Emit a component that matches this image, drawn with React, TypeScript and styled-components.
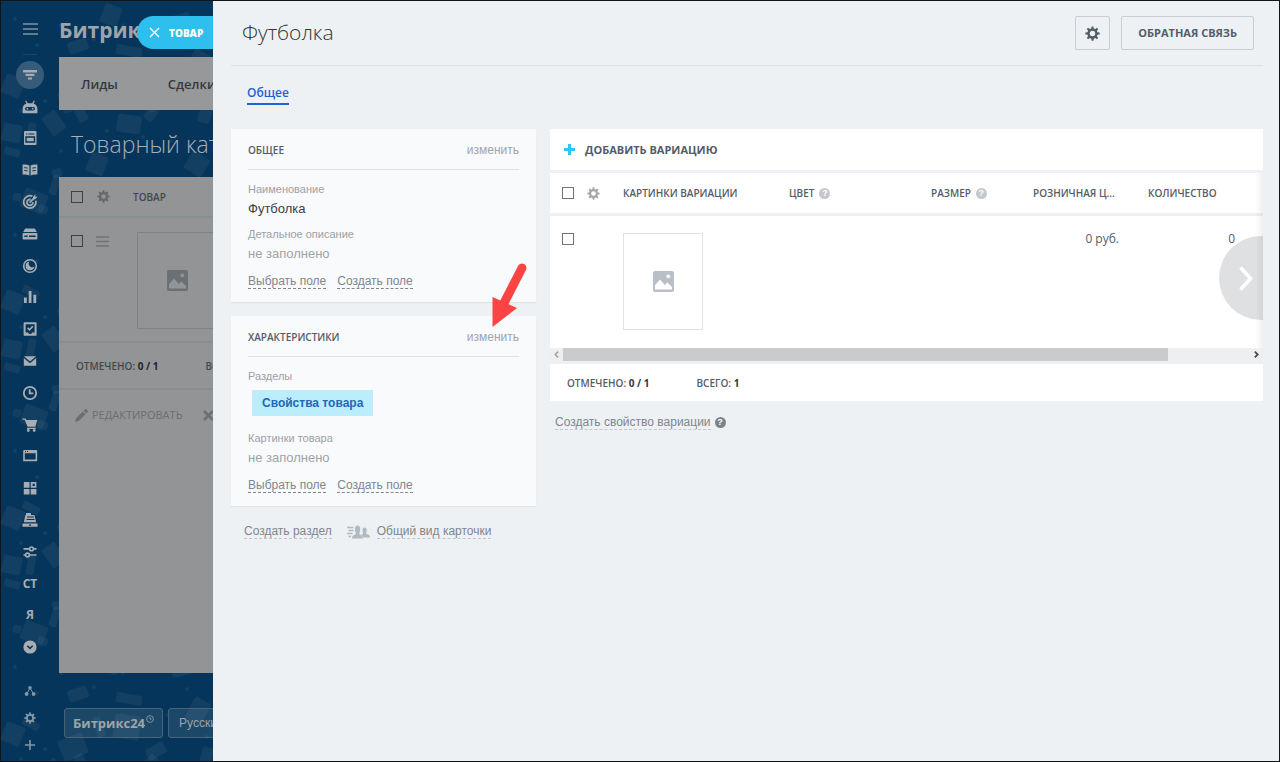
import React from 'react';
import styled, { createGlobalStyle, css } from 'styled-components';

const sans = '"Open Sans", "Liberation Sans", sans-serif';
const arial = '"Liberation Sans", Arial, sans-serif';

const GlobalStyle = createGlobalStyle`
  *, *::before, *::after { box-sizing: border-box; }
  body { margin: 0; font-family: ${sans}; background: #edf1f4; }
  button { font: inherit; border: 0; padding: 0; background: none; color: inherit; cursor: pointer; }
  a { color: inherit; text-decoration: none; }
  h1, h2, p { margin: 0; font-weight: inherit; font-size: inherit; }
  svg { display: block; flex: none; }
`;

const Screen = styled.div`
  display: flex;
  min-height: 100vh;
  border: 1px solid #111418;
  background: #05355a;
`;

/* ---------- dimmed page behind the slider ---------- */

const Backdrop = styled.div`
  position: relative;
  flex: 0 0 212px;
  display: flex;
  overflow: hidden;
  white-space: nowrap;
  color: #9fa4a8;
`;

const Wallpaper = styled.svg`
  position: absolute;
  inset: 0;
  width: 100%;
  height: 100%;
`;

const Rail = styled.nav`
  position: relative;
  flex: 0 0 58px;
  display: flex;
  flex-direction: column;
  align-items: center;
  color: #a7adb2;
`;

const RailTop = styled.div`
  display: flex;
  flex-direction: column;
  align-items: center;
  justify-content: space-between;
  width: 100%;
  height: 54px;
  padding-top: 22px;
`;

const RailRule = styled.span`
  width: 14px;
  height: 1px;
  background: #1b466a;
`;

const RailList = styled.div`
  flex: 1;
  display: flex;
  flex-direction: column;
  padding-top: 4px;
`;

const RailFoot = styled.div`
  display: flex;
  flex-direction: column;
  padding-bottom: 3px;
  padding-top: 14px;
  color: #8397a6;
`;

const RailItem = styled.button<{ $small?: boolean }>`
  flex: ${p => (p.$small ? '0 0 27px' : '1 1 0')};
  width: 58px;
  display: flex;
  align-items: center;
  justify-content: center;
  font-size: 12px;
  line-height: 16px;
  font-weight: 700;
`;

const ActiveDisc = styled.span`
  display: flex;
  align-items: center;
  justify-content: center;
  width: 28px;
  height: 28px;
  border-radius: 50%;
  background: #375c7a;
`;

const BackPage = styled.div`
  position: relative;
  flex: 0 0 154px;
  display: flex;
  flex-direction: column;
  overflow: hidden;
`;

const Brand = styled.div`
  height: 56px;
  padding-top: 14px;
  font-size: 21px;
  line-height: 30px;
  font-weight: 700;
`;

const BackNav = styled.div`
  display: flex;
  gap: 50px;
  height: 53px;
  padding-left: 22px;
  align-items: center;
  background: #979899;
  color: #34393f;
  font-size: 13px;
  font-weight: 600;
  line-height: 20px;
`;

const BackTitle = styled.h2`
  height: 67px;
  padding: 18px 0 0 12px;
  font-size: 23px;
  line-height: 32px;
  font-weight: 300;
  color: #a9afb3;
`;

const BackGrid = styled.div`
  flex: 1;
  background: #939496;
  color: #33393f;
`;

const BackRow = styled.div<{ $h: number; $top?: boolean; $pad?: number; $gap?: number }>`
  display: flex;
  align-items: ${p => (p.$top ? 'flex-start' : 'center')};
  gap: ${p => p.$gap ?? 0}px;
  height: ${p => p.$h}px;
  padding-left: ${p => p.$pad ?? 12}px;
  border-bottom: 2px solid #88908f;
  font-size: 10px;
  line-height: 16px;
  font-weight: 600;
  color: #42484e;

  b { color: #22262a; font-weight: 700; }
`;

const BackHeadText = styled.span`
  padding-left: 9px;
`;

const RowTools = styled.div`
  display: flex;
  align-items: center;
  gap: 13px;
  padding-top: 17px;
`;

const BackThumb = styled.div`
  padding: 14px 0 0 14px;
`;

const BackActions = styled.div`
  display: flex;
  align-items: center;
  gap: 4px;
  height: 50px;
  padding-left: 16px;
  color: #6b6f74;
  font-size: 11px;
  line-height: 16px;

  button { display: flex; align-items: center; gap: 4px; margin-right: 16px; }
`;

const BackFooter = styled.div`
  display: flex;
  gap: 5px;
  height: 88px;
  padding: 35px 0 0 5px;
`;

const FooterButton = styled.button<{ $logo?: boolean }>`
  display: flex;
  align-items: center;
  gap: 1px;
  height: 30px;
  padding: 0 ${p => (p.$logo ? 8 : 10)}px;
  border: 1px solid #486578;
  border-radius: 3px;
  background: rgba(255, 255, 255, 0.09);
  font-family: ${p => (p.$logo ? sans : arial)};
  font-weight: ${p => (p.$logo ? 700 : 400)};
  font-size: ${p => (p.$logo ? 13 : 12)}px;
  line-height: 18px;

  svg { align-self: flex-start; margin-top: 6px; }
`;

const SliderLabel = styled.button`
  position: absolute;
  top: 15px;
  right: 0;
  display: flex;
  align-items: center;
  gap: 9px;
  width: 76px;
  height: 33px;
  padding-left: 12px;
  border-radius: 17px 0 0 17px;
  background: #2fbfee;
  color: #fff;
  font-size: 10px;
  line-height: 14px;
  font-weight: 800;
`;

/* ---------- shared bits ---------- */

const Check = styled.input<{ $dim?: boolean }>`
  appearance: none;
  display: block;
  flex: none;
  width: 12px;
  height: 12px;
  margin: 0;
  border: 1px solid ${p => (p.$dim ? '#3c4146' : '#6e747b')};
  background: ${p => (p.$dim ? 'transparent' : '#fff')};
`;

const Thumb = styled.div<{ $dim?: boolean }>`
  flex: none;
  display: flex;
  align-items: center;
  justify-content: center;
  width: 80px;
  height: 97px;
  border: 1px solid ${p => (p.$dim ? '#7f8284' : '#e0e2e5')};
  color: ${p => (p.$dim ? '#6b7075' : '#b9bfc6')};
`;

const GearTone = styled.span<{ $dim?: boolean }>`
  display: block;
  color: ${p => (p.$dim ? '#65696e' : '#a3a8ae')};
`;

/* ---------- slider panel ---------- */

const Panel = styled.main`
  flex: 1;
  min-width: 0;
  padding: 0 16px 24px 18px;
  background: #edf1f4;
`;

const PanelHeader = styled.header`
  display: flex;
  align-items: center;
  gap: 11px;
  height: 65px;
  padding: 0 9px 0 11px;
  border-bottom: 1px solid #dde1e5;
`;

const PanelTitle = styled.h1`
  flex: 1;
  font-size: 21px;
  line-height: 28px;
  padding-bottom: 2px;
  font-weight: 300;
  color: #30353a;
`;

const OutlineButton = styled.button<{ $icon?: boolean }>`
  display: flex;
  align-items: center;
  justify-content: center;
  height: 34px;
  padding: 0 ${p => (p.$icon ? 9 : 16)}px;
  border: 1px solid #c9ced4;
  border-radius: 2px;
  color: #535c69;
  font-size: 11px;
  line-height: 16px;
  font-weight: 700;
`;

const Tabs = styled.nav`
  display: flex;
  height: 63px;
  padding: 18px 0 0 16px;
`;

const TabLink = styled.a`
  height: 21px;
  border-bottom: 2px solid #1f62de;
  color: #1f5fd0;
  font-size: 12px;
  line-height: 18px;
  font-weight: 600;
`;

const Columns = styled.div`
  display: grid;
  grid-template-columns: 305px minmax(0, 1fr);
  column-gap: 14px;
  align-items: start;
`;

const LeftColumn = styled.div`
  display: flex;
  flex-direction: column;
  gap: 14px;
`;

const Card = styled.section`
  position: relative;
  padding: 0 17px 13px;
  background: #f9fafb;
  box-shadow: 0 1px 1px rgba(0, 0, 0, 0.05);
  font-family: ${arial};
`;

const CardHead = styled.div`
  display: flex;
  align-items: center;
  justify-content: space-between;
  height: 41px;
  padding-top: 2px;
  border-bottom: 1px solid #dfe2e6;
`;

const CardTitle = styled.h2`
  font-family: ${sans};
  font-size: 10px;
  line-height: 16px;
  font-weight: 600;
  color: #535c69;
`;

const EditButton = styled.button`
  font-size: 12px;
  line-height: 16px;
  color: #a0a5ab;
`;

const Field = styled.div`
  padding-top: 11px;

  & + & { padding-top: 8px; }
`;

const FieldLabel = styled.div`
  font-size: 11px;
  line-height: 16px;
  color: #9aa1a9;
`;

const FieldValue = styled.div<{ $empty?: boolean }>`
  padding-top: 3px;
  font-size: 13px;
  line-height: 18px;
  color: ${p => (p.$empty ? '#9ea4ab' : '#3b4046')};
`;

const SectionTag = styled.div`
  width: max-content;
  margin: 6px 0 6px 4px;
  padding: 4px 10px;
  background: #bcedfc;
  color: #1f67b8;
  font-size: 12px;
  line-height: 18px;
  font-weight: 700;
`;

const LinkRow = styled.div`
  display: flex;
  gap: 11px;
  padding-top: 11px;
`;

const linkText = css`
  font-family: ${arial};
  font-size: 12px;
  line-height: 14px;
  color: #80868e;
`;

const DashLink = styled.a<{ $pale?: boolean }>`
  ${linkText}
  border-bottom: 1px dashed ${p => (p.$pale ? '#c3c7cc' : '#80868e')};
`;

const CardTools = styled.div`
  display: flex;
  align-items: center;
  padding: 4px 0 0 13px;
`;

const CardView = styled.div`
  display: flex;
  align-items: center;
  gap: 7px;
  margin-left: 15px;
  color: #b3b9c0;
`;

const PointerArrow = styled.svg`
  position: absolute;
  top: -56px;
  right: 6px;
`;

/* ---------- variations ---------- */

const Variations = styled.div`
  display: flex;
  flex-direction: column;
`;

const AddBar = styled.button`
  display: flex;
  align-items: center;
  gap: 10px;
  height: 41px;
  margin-bottom: 3px;
  padding-left: 14px;
  background: #fff;
  color: #535c69;
  font-size: 11px;
  line-height: 16px;
  font-weight: 700;
`;

const GridFrame = styled.div`
  position: relative;
  background: #fff;
`;

const Grid = styled.table`
  width: 100%;
  table-layout: fixed;
  border-collapse: separate;
  border-spacing: 0;
  color: #535c69;
`;

const HeadCell = styled.th<{ $w?: number; $left?: number }>`
  width: ${p => (p.$w ? `${p.$w}px` : 'auto')};
  height: 43px;
  padding: 0 0 0 ${p => p.$left ?? 18}px;
  border-bottom: 3px solid #edf1f4;
  text-align: left;
  white-space: nowrap;
  font-size: 10px;
  line-height: 16px;
  font-weight: 600;
`;

const HeadInner = styled.span`
  display: flex;
  align-items: center;
  gap: 5px;
`;

const Cell = styled.td<{ $left?: number; $right?: number }>`
  height: 132px;
  padding: 15px ${p => p.$right ?? 0}px 0 ${p => p.$left ?? 0}px;
  vertical-align: top;
  text-align: right;
  font-size: 12px;
  line-height: 16px;
`;

const CellLine = styled.div`
  display: flex;
  padding-top: 2px;
`;

const ScrollNext = styled.button`
  position: absolute;
  top: 63px;
  right: 0;
  display: flex;
  align-items: center;
  justify-content: center;
  width: 44px;
  height: 84px;
  padding-left: 10px;
  border-radius: 42px 0 0 42px;
  background: #dfe0e2;
  color: #fff;
`;

const EdgeShade = styled.span`
  position: absolute;
  top: 0;
  right: 0;
  bottom: 0;
  width: 8px;
  background: linear-gradient(to right, rgba(0, 0, 0, 0), rgba(0, 0, 0, 0.06));
  pointer-events: none;
`;

const ScrollBar = styled.div`
  display: flex;
  justify-content: space-between;
  height: 13px;
  margin-bottom: 3px;
  background: #efefef;
`;

const ScrollTrack = styled.div`
  flex: 1;
  display: flex;
`;

const ScrollThumb = styled.div`
  width: 88%;
  background: #cbcbcb;
`;

const ScrollButton = styled.button<{ $off?: boolean }>`
  display: flex;
  align-items: center;
  justify-content: center;
  width: 13px;
  color: ${p => (p.$off ? '#a3a3a3' : '#4a4d50')};
`;

const Totals = styled.div`
  display: flex;
  align-items: center;
  gap: 47px;
  height: 37px;
  padding-left: 17px;
  background: #fff;
  color: #535c69;
  font-size: 10px;
  line-height: 14px;
  font-weight: 600;

  b { font-weight: 700; color: #33383e; }
`;

const CreateProperty = styled.div`
  display: flex;
  align-items: center;
  gap: 4px;
  padding: 14px 0 0 5px;
`;

const HelpBadge = styled.span<{ $dark?: boolean }>`
  display: inline-flex;
  align-items: center;
  justify-content: center;
  width: 11px;
  height: 11px;
  border-radius: 50%;
  background: ${p => (p.$dark ? '#7c828a' : '#c4c8cd')};
  color: #fff;
  font-family: ${arial};
  font-size: 9px;
  line-height: 11px;
  font-weight: 700;
`;

/* ---------- icons ---------- */

function Gear({ size = 14 }: { size?: number }) {
  return (
    <svg width={size} height={size} viewBox="0 0 16 16" fill="currentColor">
      {[0, 45, 90, 135, 180, 225, 270, 315].map(a => (
        <path key={a} d="M6.6 3.4 7 .4h2l.4 3z" transform={`rotate(${a} 8 8)`} />
      ))}
      <circle cx="8" cy="8" r="4.2" fill="none" stroke="currentColor" strokeWidth="2.6" />
    </svg>
  );
}

function Picture({ cutout = '#fff' }: { cutout?: string }) {
  return (
    <svg width="21" height="21" viewBox="0 0 21 21">
      <rect width="21" height="21" rx="2" fill="currentColor" />
      <circle cx="15.3" cy="5.3" r="1.9" fill={cutout} />
      <path d="M2 18.6v-4.4L7 8.600l4.800 5.300 2.600-2.400 4.600 4.400v2.700z" fill={cutout} />
    </svg>
  );
}

function RailIcon({ children }: { children: React.ReactNode }) {
  return (
    <svg width="16" height="16" viewBox="0 0 16 16" fill="currentColor">
      {children}
    </svg>
  );
}

const dark = '#05355a';

const railIcons: { name: string; icon: React.ReactNode }[] = [
  {
    name: 'CRM',
    icon: (
      <ActiveDisc>
        <RailIcon><path d="M1 3h14v2.4H1zM3.6 6.8h8.8v2.2H3.600zM6 10.400h4v2.200H6z" /></RailIcon>
      </ActiveDisc>
    ),
  },
  {
    name: 'Роботы',
    icon: (
      <RailIcon>
        <path d="M.6 14.200V10c0-2.800 1.600-4.800 3.800-5.500L3.200 2l1-.6 1.500 2.800h4.600l1.500-2.800 1 .6-1.200 2.500c2.200.7 3.800 2.700 3.800 5.500v4.200z" />
        <rect x="3" y="8" width="10" height="3.400" rx="1.700" fill={dark} />
        <circle cx="5.400" cy="9.700" r=".9" /><circle cx="10.600" cy="9.700" r=".9" />
      </RailIcon>
    ),
  },
  {
    name: 'Лента',
    icon: (
      <RailIcon>
        <rect x="2" y="1" width="12.500" height="14" rx="1" />
        <path d="M4 4h1.400M6.400 4h6" stroke={dark} strokeWidth="1.200" />
        <path d="M4 7h8.500v5H4z" fill="none" stroke={dark} strokeWidth="1.400" />
      </RailIcon>
    ),
  },
  {
    name: 'База знаний',
    icon: (
      <RailIcon>
        <path d="M.6 2.600c2.600-.5 5-.1 6.800 1v10c-1.900-1-4.200-1.400-6.800-1zM15.400 2.600c-2.600-.5-5-.1-6.800 1v10c1.900-1 4.200-1.400 6.800-1z" />
        <path d="M2.300 5.600l3.300.5M2.300 8.400l3.300.5M13.700 5.600l-3.300.5M13.700 8.400l-3.300.5" stroke={dark} strokeWidth="1" />
      </RailIcon>
    ),
  },
  {
    name: 'Маркетинг',
    icon: (
      <RailIcon>
        <g fill="none" stroke="currentColor" strokeWidth="1.700">
          <path d="M10.400 2.300a6.200 6.200 0 1 0 3.500 4.400" />
          <path d="M8.600 5.500a3 3 0 1 0 2.300 2.600" />
          <path d="M7.600 8.700 13 3.200" />
        </g>
        <path d="M11 2.800 13.400.6v2.100h2.200L13.200 5.200H11z" />
      </RailIcon>
    ),
  },
  {
    name: 'Диск',
    icon: (
      <RailIcon>
        <path d="M3.200 2.600h9.600l2 3.400H1.200z" />
        <rect x=".6" y="7" width="14.800" height="6.600" rx=".8" />
        <path d="M2.400 10.300h3.200M7 10.300h6.600" stroke={dark} strokeWidth="1.600" />
      </RailIcon>
    ),
  },
  {
    name: 'Время',
    icon: (
      <RailIcon>
        <circle cx="8" cy="8" r="6.300" fill="none" stroke="currentColor" strokeWidth="1.600" />
        <path d="M7.400 3.600A4.400 4.400 0 1 0 12.400 8.600 3.600 3.600 0 0 1 7.400 3.600z" />
      </RailIcon>
    ),
  },
  { name: 'Аналитика', icon: <RailIcon><path d="M2 8.400h2.800V14H2zM6.700 2h2.800v12H6.700zM11.400 5.800h2.800V14h-2.800z" /></RailIcon> },
  {
    name: 'Задачи',
    icon: (
      <RailIcon>
        <rect x="1.600" y="1.300" width="13" height="13.400" rx=".8" />
        <path d="M3.600 3.300h9v8.200H10l-.8 1.400H7l-.8-1.400H3.600z" fill={dark} />
        <path d="M5.600 6.900 7.500 8.900 10.800 5.200" fill="none" stroke="currentColor" strokeWidth="1.600" />
      </RailIcon>
    ),
  },
  {
    name: 'Почта',
    icon: (
      <RailIcon>
        <path d="M1.900 3.200h12.200L8 8.400z" />
        <path d="M1.800 5 8 10.200 14.200 5v7.800H1.800z" />
      </RailIcon>
    ),
  },
  {
    name: 'Рабочий день',
    icon: (
      <RailIcon>
        <g fill="none" stroke="currentColor" strokeWidth="1.800">
          <circle cx="8" cy="8" r="6.200" />
          <path d="M7.700 4.200v4.200h3.600" />
        </g>
      </RailIcon>
    ),
  },
  {
    name: 'Магазин',
    icon: (
      <RailIcon>
        <path d="M.4 1.400h3.200l.7 1.700h11l-2 6.700H5.600L2.600 2.700H.4zM5 10.700h8.800v1.300H5z" />
        <circle cx="6.300" cy="13.500" r="1.400" /><circle cx="12.200" cy="13.500" r="1.400" />
      </RailIcon>
    ),
  },
  {
    name: 'Сайты',
    icon: (
      <RailIcon>
        <path fillRule="evenodd" d="M2.200 2h12a1 1 0 0 1 1 1v10.200H1.200V3a1 1 0 0 1 1-1zM2.800 5.200v6.400h10.800V5.200z" />
        <path d="M3 3.600h1M5 3.600h1" stroke={dark} strokeWidth="1" />
      </RailIcon>
    ),
  },
  {
    name: 'Маркет',
    icon: (
      <RailIcon>
        <path fillRule="evenodd" d="M1.800 2h5.700v5.700H1.800zM8.700 2h5.700v5.700H8.700zM10.600 3.700v2.200h2.200V3.700zM1.800 8.900h5.700v5.500H1.800zM8.700 8.900h5.700v5.500H8.700z" />
      </RailIcon>
    ),
  },
  {
    name: 'Касса',
    icon: (
      <RailIcon>
        <path d="M4 3V1h5v2h3.400l1.800 7.300H1.800L3.400 3z" />
        <path d="M5 5h7M4.600 7.500h8" stroke={dark} strokeWidth="1" />
        <rect x=".4" y="11.400" width="15.200" height="3.400" rx=".5" />
        <rect x="7" y="12.500" width="2" height="1.200" fill={dark} />
      </RailIcon>
    ),
  },
  {
    name: 'Настройки CRM',
    icon: (
      <RailIcon>
        <g fill="none" stroke="currentColor" strokeWidth="1.600">
          <path d="M1.500 4.900h6M11.600 4.900h2.900M1.500 11h1.900M7.600 11h6.900" />
          <circle cx="9.500" cy="4.900" r="1.900" /><circle cx="5.500" cy="11" r="1.900" />
        </g>
      </RailIcon>
    ),
  },
  { name: 'СТ', icon: 'СТ' },
  { name: 'Я', icon: 'Я' },
  {
    name: 'Ещё',
    icon: (
      <RailIcon>
        <circle cx="8" cy="8" r="6.600" />
        <path d="M5.300 6.800 8 9.400l2.700-2.600" fill="none" stroke={dark} strokeWidth="1.500" />
      </RailIcon>
    ),
  },
];

const tileShapes: [number, number, number, number, number][] = [
  [77, 45, 20, 12, -18], [72, 98, 26, 22, -22], [98, 78, 8, 20, -18], [128, 50, 26, 10, 10],
  [126, 78, 26, 24, 8], [197, 62, 18, 24, 28], [155, 102, 20, 12, -30], [128, 123, 24, 18, 8],
  [150, 113, 10, 14, 40], [196, 163, 20, 20, 32], [96, 163, 18, 20, 20], [80, 113, 10, 16, -30],
  [12, 85, 20, 20, 22], [30, 75, 18, 8, 28], [11, 132, 19, 18, 12], [30, 132, 8, 20, 10],
  [11, 151, 16, 8, 16], [53, 122, 16, 22, -36], [54, 184, 8, 20, 18], [33, 200, 24, 20, 22],
  [42, 208, 10, 8, 24], [180, 20, 20, 14, -14], [110, 14, 18, 20, 20], [16, 196, 8, 8, 10],
  [56, 172, 10, 8, -20], [205, 110, 12, 24, 16],
];

const dots: [number, number][] = [
  [14, 18], [36, 44], [60, 24], [93, 38], [122, 24], [142, 136], [106, 130], [60, 150],
  [90, 184], [186, 40], [166, 66], [170, 140], [20, 110], [44, 100], [206, 88], [120, 196],
];

function Pattern() {
  return (
    <Wallpaper aria-hidden="true">
      <defs>
        <pattern id="tiles" width="216" height="216" patternUnits="userSpaceOnUse">
          <rect width="216" height="216" fill={dark} />
          <g fill="#fff" fillOpacity=".05">
            {tileShapes.map(([x, y, w, h, a], i) => (
              <rect key={i} x={x - w / 2} y={y - h / 2} width={w} height={h} rx="2" transform={`rotate(${a} ${x} ${y})`} />
            ))}
            {dots.map(([x, y], i) => <circle key={i} cx={x} cy={y} r="2" />)}
          </g>
        </pattern>
      </defs>
      <rect width="100%" height="100%" fill="url(#tiles)" />
    </Wallpaper>
  );
}

/* ---------- page ---------- */

function BackgroundPage() {
  return (
    <Backdrop>
      <Pattern />
      <Rail aria-label="Меню">
        <RailTop>
          <svg width="15" height="12" viewBox="0 0 15 12"><path d="M0 1h15M0 6h15M0 11h15" stroke="#7f94a4" strokeWidth="1.500" /></svg>
          <RailRule />
        </RailTop>
        <RailList>
          {railIcons.map(item => (
            <RailItem key={item.name} type="button" aria-label={item.name}>{item.icon}</RailItem>
          ))}
        </RailList>
        <RailFoot>
          <RailItem type="button" $small aria-label="Структура">
            <svg width="12" height="12" viewBox="0 0 12 12" fill="currentColor">
              <circle cx="6" cy="2.800" r="1.800" /><circle cx="2.600" cy="9" r="1.900" /><circle cx="9.600" cy="9" r="1.900" />
              <path d="M2.600 9 6 3l3.600 6" fill="none" stroke="currentColor" />
            </svg>
          </RailItem>
          <RailItem type="button" $small aria-label="Настройки"><Gear size={12} /></RailItem>
          <RailItem type="button" $small aria-label="Добавить">
            <svg width="10" height="10" viewBox="0 0 10 10"><path d="M5 0v10M0 5h10" stroke="currentColor" strokeWidth="1.600" /></svg>
          </RailItem>
        </RailFoot>
      </Rail>
      <BackPage>
        <Brand>Битрикс</Brand>
        <BackNav><a href="#leads">Лиды</a><a href="#deals">Сделки</a></BackNav>
        <BackTitle>Товарный кат</BackTitle>
        <BackGrid>
          <BackRow $h={41} $gap={14}>
            <Check type="checkbox" $dim aria-label="Выбрать все товары" />
            <GearTone $dim><Gear size={13} /></GearTone>
            <BackHeadText>ТОВАР</BackHeadText>
          </BackRow>
          <BackRow $h={125} $top $gap={14}>
            <RowTools>
              <Check type="checkbox" $dim aria-label="Выбрать товар" />
              <svg width="13" height="11" viewBox="0 0 13 11"><path d="M0 1h13M0 5.500h13M0 10h13" stroke="#6f7377" strokeWidth="1.300" /></svg>
            </RowTools>
            <BackThumb><Thumb $dim><Picture cutout="#939496" /></Thumb></BackThumb>
          </BackRow>
          <BackRow $h={47} $pad={17} $gap={47}>
            <span>ОТМЕЧЕНО: <b>0 / 1</b></span>
            <span>ВСЕГО:</span>
          </BackRow>
          <BackActions>
            <button type="button">
              <svg width="13" height="13" viewBox="0 0 13 13" fill="currentColor"><path d="M0 13l1-3.700 6.800-6.800 2.700 2.700-6.800 6.800zM8.600 1.700 9.900.4c.5-.5 1.200-.5 1.600 0l1.100 1.100c.5.500.5 1.100 0 1.600l-1.300 1.300z" /></svg>
              РЕДАКТИРОВАТЬ
            </button>
            <button type="button" aria-label="Удалить">
              <svg width="11" height="11" viewBox="0 0 11 11"><path d="M1 1l9 9M10 1l-9 9" stroke="currentColor" strokeWidth="2.600" /></svg>
            </button>
          </BackActions>
        </BackGrid>
        <BackFooter>
          <FooterButton type="button" $logo>
            Битрикс24
            <svg width="8" height="8" viewBox="0 0 8 8" fill="none" stroke="currentColor" strokeWidth=".8"><circle cx="4" cy="4" r="3.400" /><path d="M4 2v2.200h1.600" /></svg>
          </FooterButton>
          <FooterButton type="button">Русский</FooterButton>
        </BackFooter>
      </BackPage>
      <SliderLabel type="button">
        <svg width="11" height="11" viewBox="0 0 11 11"><path d="M1 1l9 9M10 1l-9 9" stroke="#fff" strokeWidth="1.400" /></svg>
        ТОВАР
      </SliderLabel>
    </Backdrop>
  );
}

export default function App() {
  return (
    <>
      <GlobalStyle />
      <Screen>
        <BackgroundPage />
        <Panel>
          <PanelHeader>
            <PanelTitle>Футболка</PanelTitle>
            <OutlineButton type="button" $icon aria-label="Настройки"><Gear size={15} /></OutlineButton>
            <OutlineButton type="button">ОБРАТНАЯ СВЯЗЬ</OutlineButton>
          </PanelHeader>
          <Tabs><TabLink href="#general">Общее</TabLink></Tabs>
          <Columns>
            <LeftColumn>
              <Card>
                <CardHead><CardTitle>ОБЩЕЕ</CardTitle><EditButton type="button">изменить</EditButton></CardHead>
                <Field><FieldLabel>Наименование</FieldLabel><FieldValue>Футболка</FieldValue></Field>
                <Field><FieldLabel>Детальное описание</FieldLabel><FieldValue $empty>не заполнено</FieldValue></Field>
                <LinkRow><DashLink href="#select">Выбрать поле</DashLink><DashLink href="#create">Создать поле</DashLink></LinkRow>
              </Card>
              <Card>
                <CardHead><CardTitle>ХАРАКТЕРИСТИКИ</CardTitle><EditButton type="button">изменить</EditButton></CardHead>
                <Field><FieldLabel>Разделы</FieldLabel><SectionTag>Свойства товара</SectionTag></Field>
                <Field><FieldLabel>Картинки товара</FieldLabel><FieldValue $empty>не заполнено</FieldValue></Field>
                <LinkRow><DashLink href="#select2">Выбрать поле</DashLink><DashLink href="#create2">Создать поле</DashLink></LinkRow>
                <PointerArrow width="40" height="68" viewBox="0 0 40 68" aria-hidden="true">
                  <path d="M32 8 14 43" stroke="#fd4444" strokeWidth="9" strokeLinecap="round" />
                  <path d="M2.500 37 27 48 2.500 67z" fill="#fd4444" />
                </PointerArrow>
              </Card>
              <CardTools>
                <DashLink $pale href="#section">Создать раздел</DashLink>
                <CardView>
                  <svg width="23" height="14" viewBox="0 0 23 14" fill="currentColor">
                    <path d="M0 2.500h6.500M1.500 5.500h5M0 8.500h5.500M1.500 11.500H4" stroke="currentColor" strokeWidth="1.300" />
                    <path d="M16 12.500c0-1.400-.6-2.400-1.600-3 1.400-.6 2-.9 1.700-1.700-.8-1.300-1.200-5.300 1.500-5.300s2.400 3.900 1.600 5.200c-.3.900.1 1.100 1.300 1.600 1.500.6 2.400 1 2.500 3.200z" />
                    <path d="M5 13.500c.1-2.700 1-3.200 3-4.100 1.200-.5 1.100-1.100.7-1.900C7.500 5.400 7.500.6 10.600.6s3 4.800 1.900 6.900c-.4.800-.4 1.400.6 1.900 2 .9 2.800 1.400 2.900 4.100z" />
                  </svg>
                  <DashLink $pale href="#view">Общий вид карточки</DashLink>
                </CardView>
              </CardTools>
            </LeftColumn>
            <Variations>
              <AddBar type="button">
                <svg width="11" height="11" viewBox="0 0 11 11"><path d="M5.500 0v11M0 5.500h11" stroke="#2fc6f6" strokeWidth="3" /></svg>
                ДОБАВИТЬ ВАРИАЦИЮ
              </AddBar>
              <GridFrame>
                <Grid>
                  <thead>
                    <tr>
                      <HeadCell $w={31} $left={12}><Check type="checkbox" aria-label="Выбрать все вариации" /></HeadCell>
                      <HeadCell $w={24} $left={6}><GearTone><Gear size={13} /></GearTone></HeadCell>
                      <HeadCell $w={166}>КАРТИНКИ ВАРИАЦИИ</HeadCell>
                      <HeadCell $w={142}><HeadInner>ЦВЕТ <HelpBadge>?</HelpBadge></HeadInner></HeadCell>
                      <HeadCell><HeadInner>РАЗМЕР <HelpBadge>?</HelpBadge></HeadInner></HeadCell>
                      <HeadCell $w={115}>РОЗНИЧНАЯ Ц...</HeadCell>
                      <HeadCell $w={133}>КОЛИЧЕСТВО</HeadCell>
                    </tr>
                  </thead>
                  <tbody>
                    <tr>
                      <Cell $left={12}><CellLine><Check type="checkbox" aria-label="Выбрать вариацию" /></CellLine></Cell>
                      <Cell />
                      <Cell $left={18}><CellLine><Thumb><Picture /></Thumb></CellLine></Cell>
                      <Cell />
                      <Cell />
                      <Cell $right={11}>0 руб.</Cell>
                      <Cell $right={28}>0</Cell>
                    </tr>
                  </tbody>
                </Grid>
                <ScrollNext type="button" aria-label="Прокрутить вправо">
                  <svg width="14" height="25" viewBox="0 0 14 25"><path d="M1.500 1.500 11.500 12.500 1.500 23.500" fill="none" stroke="currentColor" strokeWidth="3.600" /></svg>
                </ScrollNext>
                <EdgeShade />
              </GridFrame>
              <ScrollBar>
                <ScrollButton type="button" $off aria-label="Назад">
                  <svg width="5" height="7" viewBox="0 0 5 7"><path d="M4.200.6 1.200 3.500l3 2.900" fill="none" stroke="currentColor" strokeWidth="1.500" /></svg>
                </ScrollButton>
                <ScrollTrack><ScrollThumb /></ScrollTrack>
                <ScrollButton type="button" aria-label="Вперёд">
                  <svg width="5" height="7" viewBox="0 0 5 7"><path d="M.8.600l3 2.900-3 2.900" fill="none" stroke="currentColor" strokeWidth="1.800" /></svg>
                </ScrollButton>
              </ScrollBar>
              <Totals>
                <span>ОТМЕЧЕНО: <b>0 / 1</b></span>
                <span>ВСЕГО: <b>1</b></span>
              </Totals>
              <CreateProperty>
                <DashLink $pale href="#property">Создать свойство вариации</DashLink>
                <HelpBadge $dark>?</HelpBadge>
              </CreateProperty>
            </Variations>
          </Columns>
        </Panel>
      </Screen>
    </>
  );
}
